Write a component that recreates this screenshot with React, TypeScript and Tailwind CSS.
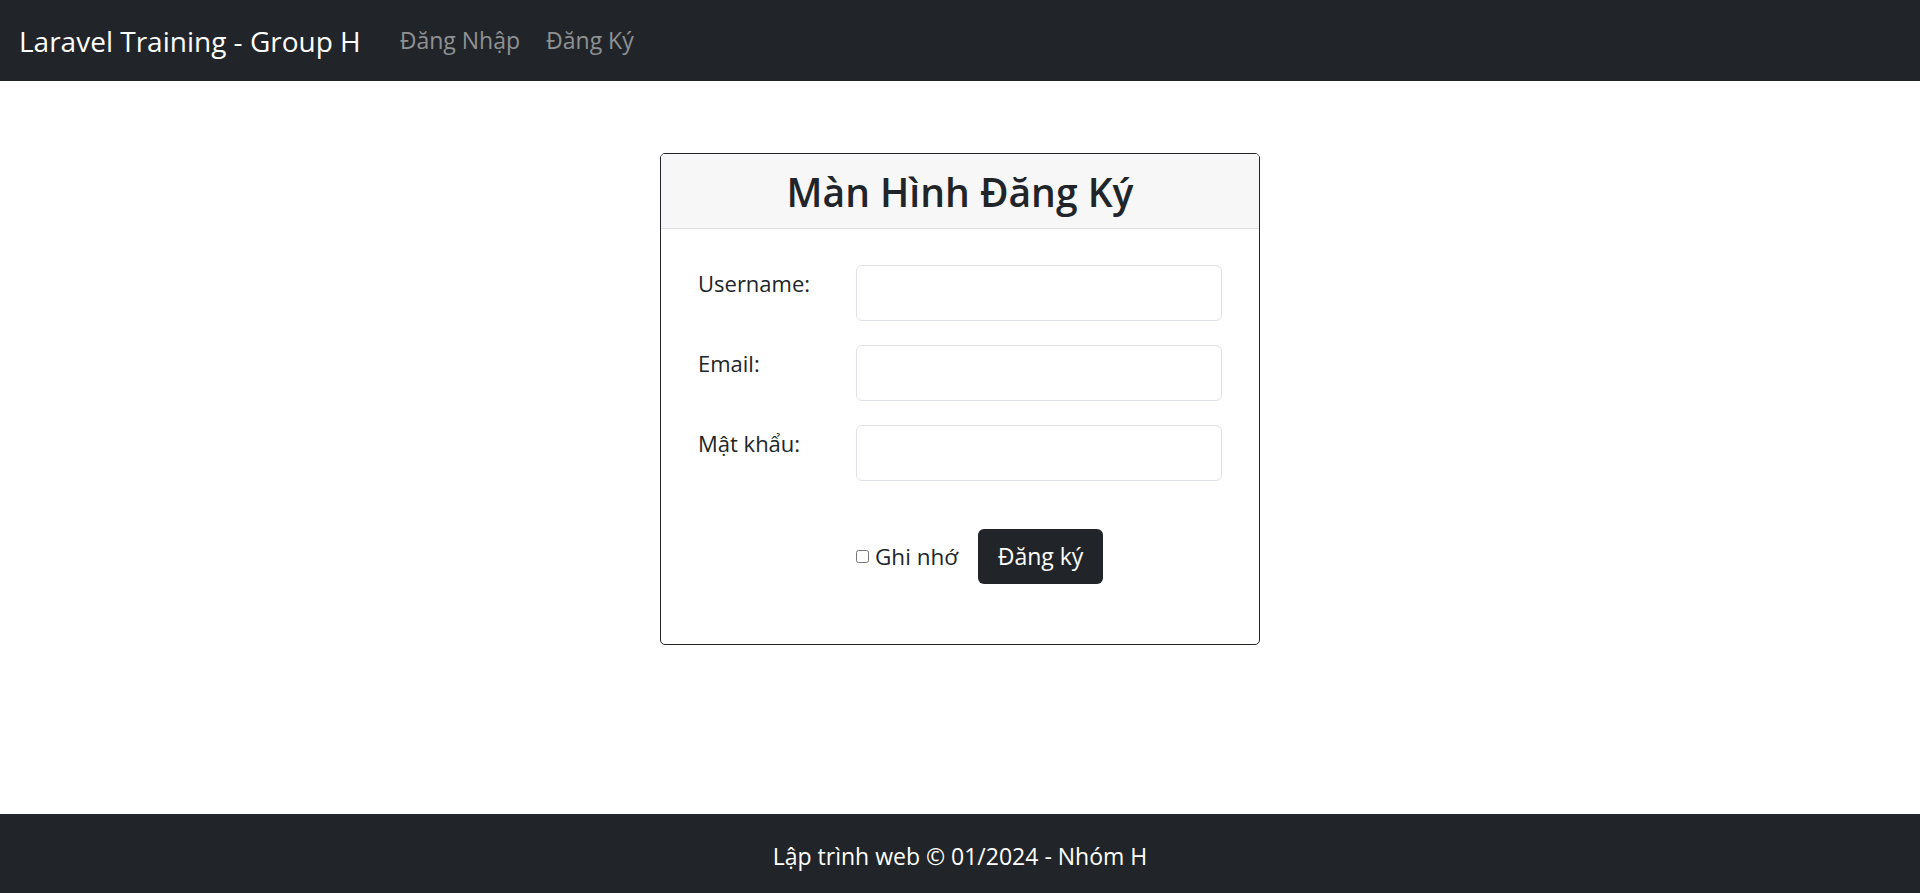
const font = { fontFamily: '"Open Sans", "Noto Sans", sans-serif' };

const fields = [
  { label: "Username:", type: "text" },
  { label: "Email:", type: "email" },
  { label: "Mật khẩu:", type: "password" },
];

const Navbar = () => (
  <nav className="flex h-[81px] items-center bg-[#212529] px-[19px]">
    <a className="text-[28px] text-white">Laravel Training - Group H</a>
    <div className="ml-[39px] flex gap-[26px] text-[23px] text-[#8f9193]">
      <a>Đăng Nhập</a>
      <a>Đăng Ký</a>
    </div>
  </nav>
);

const Footer = () => (
  <footer className="flex h-[79px] items-center justify-center bg-[#212529] pt-[6px] text-[23px] text-white">
    Lập trình web © 01/2024 - Nhóm H
  </footer>
);

export default function App() {
  return (
    <div className="flex min-h-screen flex-col bg-white text-[#212529]" style={font}>
      <Navbar />
      <main className="flex flex-1 justify-center pt-[72px]">
        <div className="h-fit w-[600px] overflow-hidden rounded-[5px] border border-[#212529]">
          <div className="flex h-[75px] items-center justify-center border-b border-[#dcdcdc] bg-[#f7f7f7]">
            <h2 className="text-[39px] leading-none font-semibold">Màn Hình Đăng Ký</h2>
          </div>
          <form className="flex flex-col gap-[24px] px-[37px] pt-[36px] pb-[60px]">
            {fields.map((f) => (
              <div key={f.label} className="flex items-start">
                <label className="w-[158px] pt-[1px] text-[22px] leading-[34px]">
                  {f.label}
                </label>
                <input
                  type={f.type}
                  className="h-[56px] w-[366px] rounded-[6px] border border-[#dee2e6] bg-white"
                />
              </div>
            ))}
            <div className="mt-[24px] flex items-center pl-[158px]">
              <label className="flex items-center gap-[6px] text-[22.5px]">
                <input type="checkbox" className="h-[13px] w-[13px]" />
                Ghi nhớ
              </label>
              <button
                type="button"
                className="ml-[20px] h-[55px] w-[125px] rounded-[6px] bg-[#212529] text-[23px] text-white"
              >
                Đăng ký
              </button>
            </div>
          </form>
        </div>
      </main>
      <Footer />
    </div>
  );
}
